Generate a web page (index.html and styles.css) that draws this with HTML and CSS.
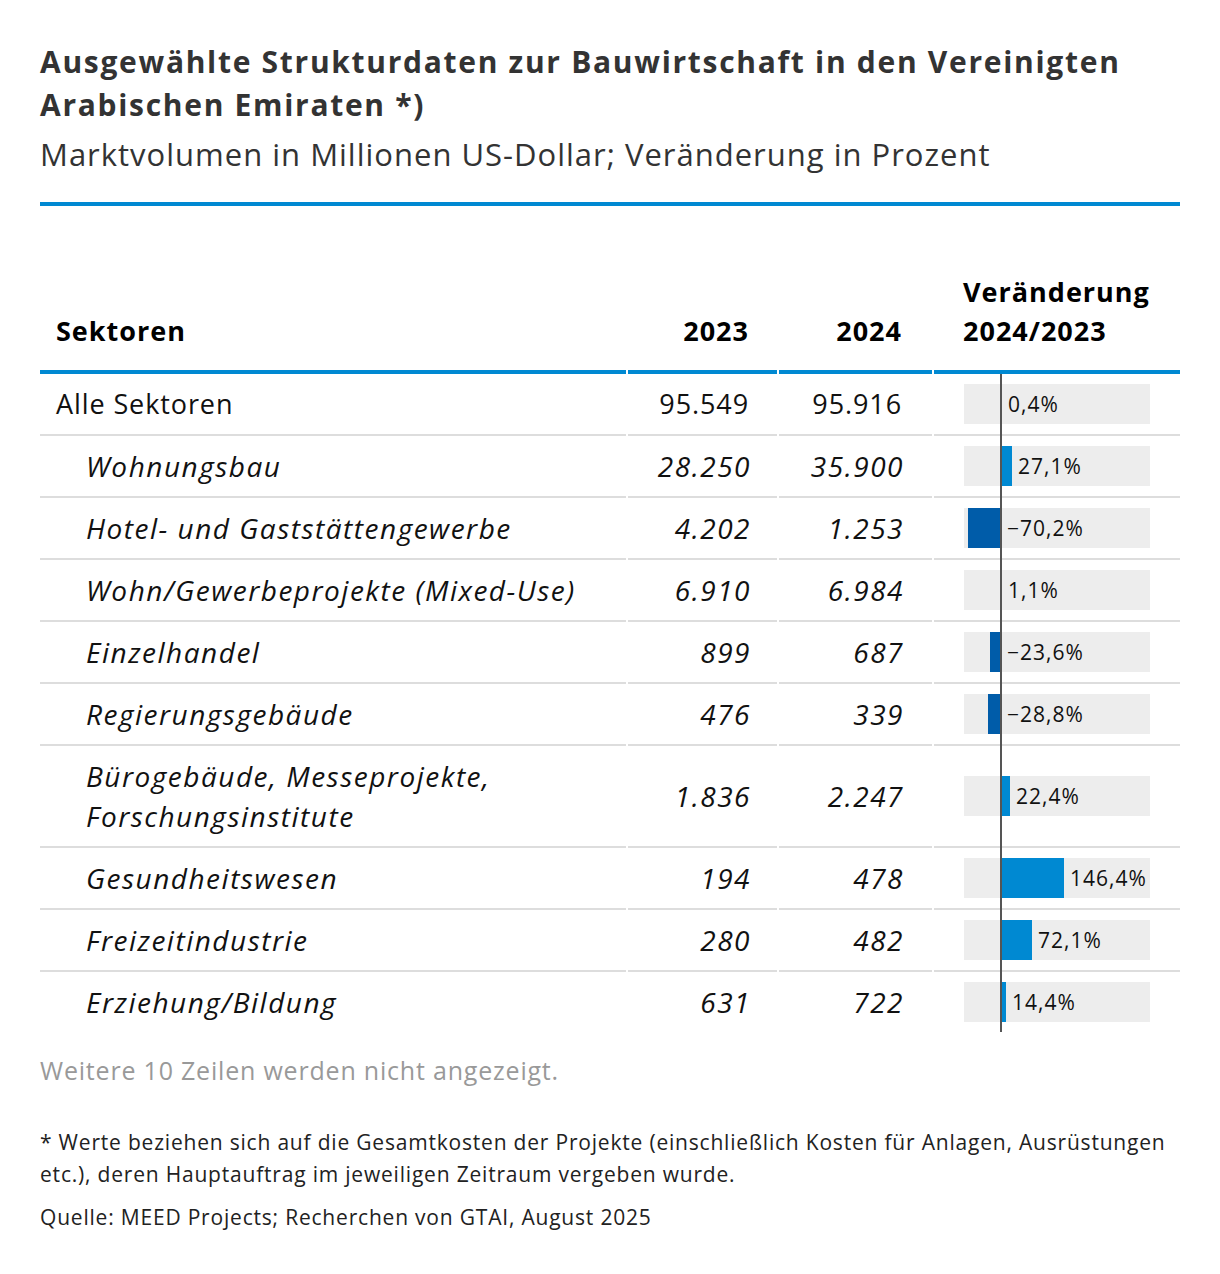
FILE: index.html
```html
<!DOCTYPE html>
<html lang="de">
<head>
<meta charset="utf-8">
<title>Strukturdaten Bauwirtschaft VAE</title>
<link rel="stylesheet" href="styles.css">
</head>
<body>
<div class="chart">
  <header class="head">
    <h1 class="title">Ausgewählte Strukturdaten zur Bauwirtschaft in den Vereinigten Arabischen Emiraten *)</h1>
    <p class="subtitle">Marktvolumen in Millionen US-Dollar; Veränderung in Prozent</p>
  </header>
  <table class="data">
    <colgroup>
      <col class="c-sector"><col class="c-num1"><col class="c-num2"><col class="c-chg">
    </colgroup>
    <thead>
      <tr>
        <th class="sector">Sektoren</th>
        <th class="num">2023</th>
        <th class="num n2">2024</th>
        <th class="chg-h">Veränderung<br>2024/2023</th>
      </tr>
    </thead>
    <tbody>
      <tr>
        <td class="sector">Alle Sektoren</td>
        <td class="num">95.549</td>
        <td class="num n2">95.916</td>
        <td class="chg"><div class="barbox"><div class="neg"></div><div class="pos"><span class="bar p tiny" style="width:1px"></span><span class="lbl">0,4%</span></div></div></td>
      </tr>
      <tr class="sub">
        <td class="sector">Wohnungsbau</td>
        <td class="num">28.250</td>
        <td class="num n2">35.900</td>
        <td class="chg"><div class="barbox"><div class="neg"></div><div class="pos"><span class="bar p" style="width:11px"></span><span class="lbl">27,1%</span></div></div></td>
      </tr>
      <tr class="sub">
        <td class="sector">Hotel- und Gaststättengewerbe</td>
        <td class="num">4.202</td>
        <td class="num n2">1.253</td>
        <td class="chg"><div class="barbox"><div class="neg"><span class="bar n" style="width:32px"></span></div><div class="pos"><span class="lbl">−70,2%</span></div></div></td>
      </tr>
      <tr class="sub">
        <td class="sector">Wohn/Gewerbeprojekte (Mixed-Use)</td>
        <td class="num">6.910</td>
        <td class="num n2">6.984</td>
        <td class="chg"><div class="barbox"><div class="neg"></div><div class="pos"><span class="bar p tiny" style="width:1px"></span><span class="lbl">1,1%</span></div></div></td>
      </tr>
      <tr class="sub">
        <td class="sector">Einzelhandel</td>
        <td class="num">899</td>
        <td class="num n2">687</td>
        <td class="chg"><div class="barbox"><div class="neg"><span class="bar n" style="width:10px"></span></div><div class="pos"><span class="lbl">−23,6%</span></div></div></td>
      </tr>
      <tr class="sub">
        <td class="sector">Regierungsgebäude</td>
        <td class="num">476</td>
        <td class="num n2">339</td>
        <td class="chg"><div class="barbox"><div class="neg"><span class="bar n" style="width:12px"></span></div><div class="pos"><span class="lbl">−28,8%</span></div></div></td>
      </tr>
      <tr class="sub">
        <td class="sector">Bürogebäude, Messeprojekte,<br>Forschungsinstitute</td>
        <td class="num">1.836</td>
        <td class="num n2">2.247</td>
        <td class="chg"><div class="barbox"><div class="neg"></div><div class="pos"><span class="bar p" style="width:9px"></span><span class="lbl">22,4%</span></div></div></td>
      </tr>
      <tr class="sub">
        <td class="sector">Gesundheitswesen</td>
        <td class="num">194</td>
        <td class="num n2">478</td>
        <td class="chg"><div class="barbox"><div class="neg"></div><div class="pos"><span class="bar p" style="width:63px"></span><span class="lbl">146,4%</span></div></div></td>
      </tr>
      <tr class="sub">
        <td class="sector">Freizeitindustrie</td>
        <td class="num">280</td>
        <td class="num n2">482</td>
        <td class="chg"><div class="barbox"><div class="neg"></div><div class="pos"><span class="bar p" style="width:31px"></span><span class="lbl">72,1%</span></div></div></td>
      </tr>
      <tr class="sub last">
        <td class="sector">Erziehung/Bildung</td>
        <td class="num">631</td>
        <td class="num n2">722</td>
        <td class="chg"><div class="barbox"><div class="neg"></div><div class="pos"><span class="bar p" style="width:5px"></span><span class="lbl">14,4%</span></div></div></td>
      </tr>
    </tbody>
  </table>
  <p class="more">Weitere 10 Zeilen werden nicht angezeigt.</p>
  <p class="note">* Werte beziehen sich auf die Gesamtkosten der Projekte (einschließlich Kosten für Anlagen, Ausrüstungen etc.), deren Hauptauftrag im jeweiligen Zeitraum vergeben wurde.</p>
  <p class="source">Quelle: MEED Projects; Recherchen von GTAI, August 2025</p>
</div>
</body>
</html>
```

FILE: styles.css
```css
* { box-sizing: border-box; }

html, body {
  margin: 0;
  padding: 0;
  background: #ffffff;
}

body {
  font-family: "Open Sans", "Noto Sans", "DejaVu Sans", sans-serif;
  color: #000;
}

.chart {
  width: 1220px;
  padding: 40px 40px 30px;
}

.head {
  padding-bottom: 26px;
  border-bottom: 4px solid #0089d2;
}

.title {
  margin: 0;
  font-size: 30px;
  line-height: 43px;
  font-weight: 700;
  letter-spacing: 1.7px;
  color: #333;
}

.subtitle {
  margin: 7px 0 0;
  font-size: 31px;
  line-height: 43px;
  font-weight: 400;
  letter-spacing: 1px;
  color: #333;
}

.data {
  width: calc(100% + 4px);
  margin: 66px -2px 0;
  border-collapse: separate;
  border-spacing: 2px 0;
  table-layout: fixed;
}

.c-sector { width: 586px; }
.c-num1 { width: 149px; }
.c-num2 { width: 153px; }
.c-chg { width: 246px; }

.data th {
  font-size: 27px;
  line-height: 39px;
  font-weight: 700;
  letter-spacing: 1px;
  color: #000;
  vertical-align: bottom;
  padding: 0 0 20px;
  border-bottom: 4px solid #0089d2;
  text-align: left;
}

.data th.sector { padding-left: 16px; }
.data th.num { text-align: right; padding-right: 28px; }
.data th.n2 { padding-right: 30px; }
.data th.chg-h { padding-left: 29px; }

.data td {
  font-size: 27px;
  line-height: 40px;
  letter-spacing: 0.9px;
  padding: 10px 0;
  border-bottom: 2px solid #dddddd;
  vertical-align: middle;
  color: #111;
}

.data tr.last td { border-bottom: none; }

.data td.sector { padding-left: 16px; }
.data tr.sub td.sector { padding-left: 46px; }
.data tr.sub td { font-style: italic; font-size: 28px; letter-spacing: 1.5px; }

.data td.num { text-align: right; padding-right: 28px; }
.data td.n2 { padding-right: 30px; }
.data tr.sub td.num { padding-right: 26px; }
.data tr.sub td.n2 { padding-right: 28px; }

.data td.chg,
.data tr.sub td.chg {
  position: relative;
  padding-left: 30px;
  letter-spacing: 0;
}

.data td.chg::after {
  content: "";
  position: absolute;
  left: 66px;
  top: 0;
  bottom: -2px;
  width: 2px;
  background: #555;
}

.data tr.last td.chg::after { bottom: 0; }

.barbox {
  display: flex;
  width: 186px;
  height: 40px;
  background: #ededed;
  font-style: normal;
}

.neg {
  width: 36px;
  display: flex;
  justify-content: flex-end;
}

.pos {
  flex: 1;
  display: flex;
  align-items: center;
  padding-left: 1px;
}

.bar {
  display: block;
  height: 40px;
  flex: none;
}

.bar.p { background: #0089d2; }
.bar.n { background: #005ca9; }
.bar.tiny { background: #005ca9; }

.lbl {
  margin-left: 6px;
  font-size: 21px;
  line-height: 40px;
  letter-spacing: 1px;
  font-style: normal;
  color: #111;
  white-space: nowrap;
}

.more {
  margin: 22px 0 0;
  font-size: 25px;
  line-height: 32px;
  letter-spacing: 0.8px;
  color: #999;
}

.note {
  margin: 40px 0 0;
  font-size: 21px;
  line-height: 32px;
  letter-spacing: 0.8px;
  color: #222;
}

.source {
  margin: 11px 0 0;
  font-size: 21px;
  line-height: 32px;
  letter-spacing: 0.8px;
  color: #222;
}
```
